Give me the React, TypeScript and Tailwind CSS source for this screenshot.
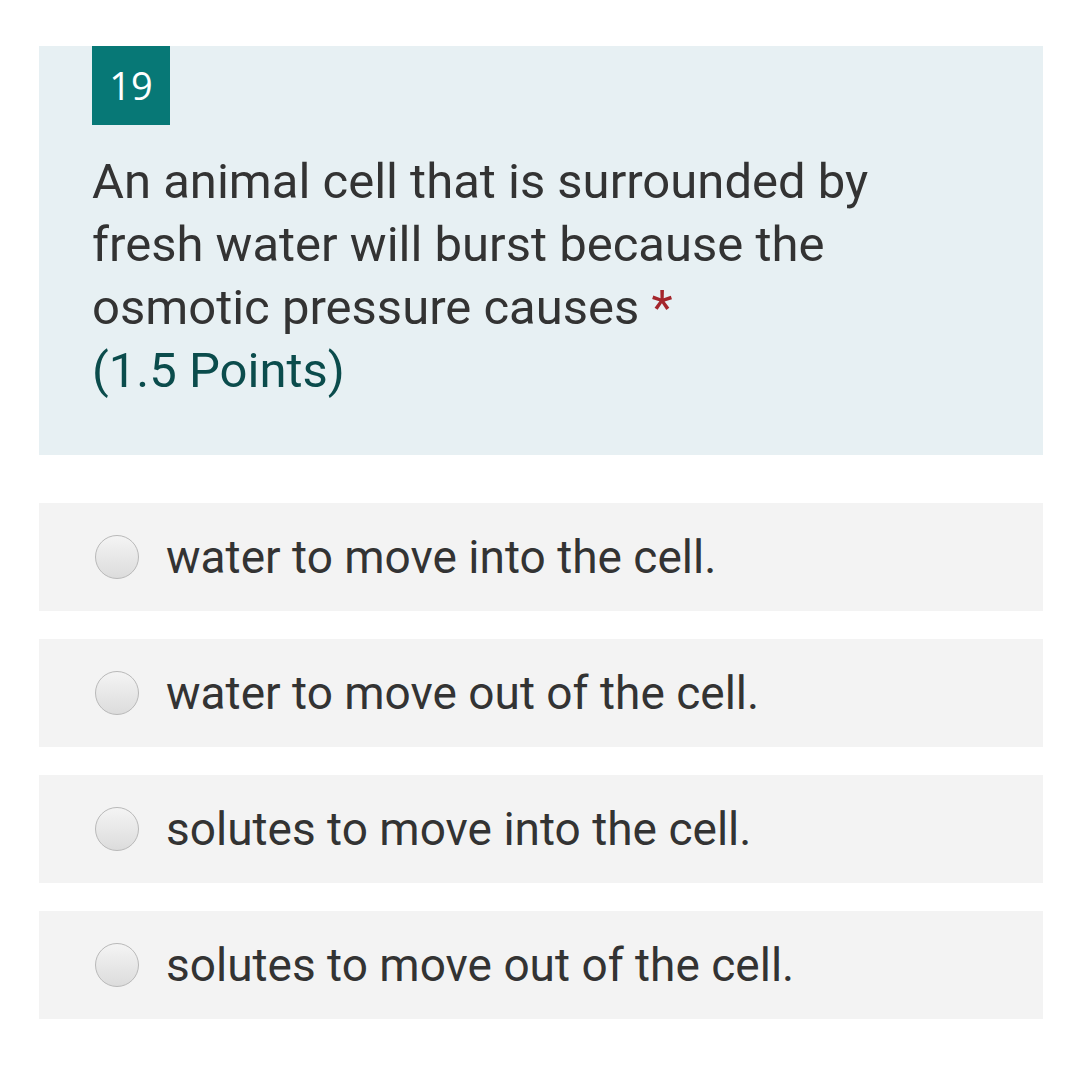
export default function App() {
  const options = [
    "water to move into the cell.",
    "water to move out of the cell.",
    "solutes to move into the cell.",
    "solutes to move out of the cell.",
  ]
  return (
    <div className="min-h-[1071px] w-[1080px] bg-white pt-[46px]" style={{ fontFamily: "Roboto, sans-serif" }}>
      {/* Question header */}
      <div className="ml-[39px] h-[409px] w-[1004px] bg-[#e7f0f3] pl-[53px]">
        <div
          className="flex h-[79px] w-[78px] items-center justify-center bg-[#077876] text-[38px] text-white"
          style={{ fontFamily: "'Open Sans', sans-serif" }}
        >
          19
        </div>
        <div className="mt-[25px] w-[880px] text-[49px] leading-[63px] text-[#333333]">
          An animal cell that is surrounded by fresh water will burst because the osmotic pressure causes{" "}
          <span className="text-[#a4262c]">*</span>
          <div className="text-[#0b4c4c]">(1.5 Points)</div>
        </div>
      </div>

      {/* Options */}
      <div className="ml-[39px] mt-[48px] flex w-[1004px] flex-col gap-[28px]">
        {options.map((o) => (
          <div key={o} className="flex h-[108px] items-center bg-[#f3f3f3] pl-[56px]">
            <div className="h-[44px] w-[44px] rounded-full border border-[#b9b9b9] bg-gradient-to-b from-[#f4f4f4] to-[#dcdcdc]" />
            <div className="ml-[27px] text-[46px] text-[#333333]">{o}</div>
          </div>
        ))}
      </div>
    </div>
  )
}
